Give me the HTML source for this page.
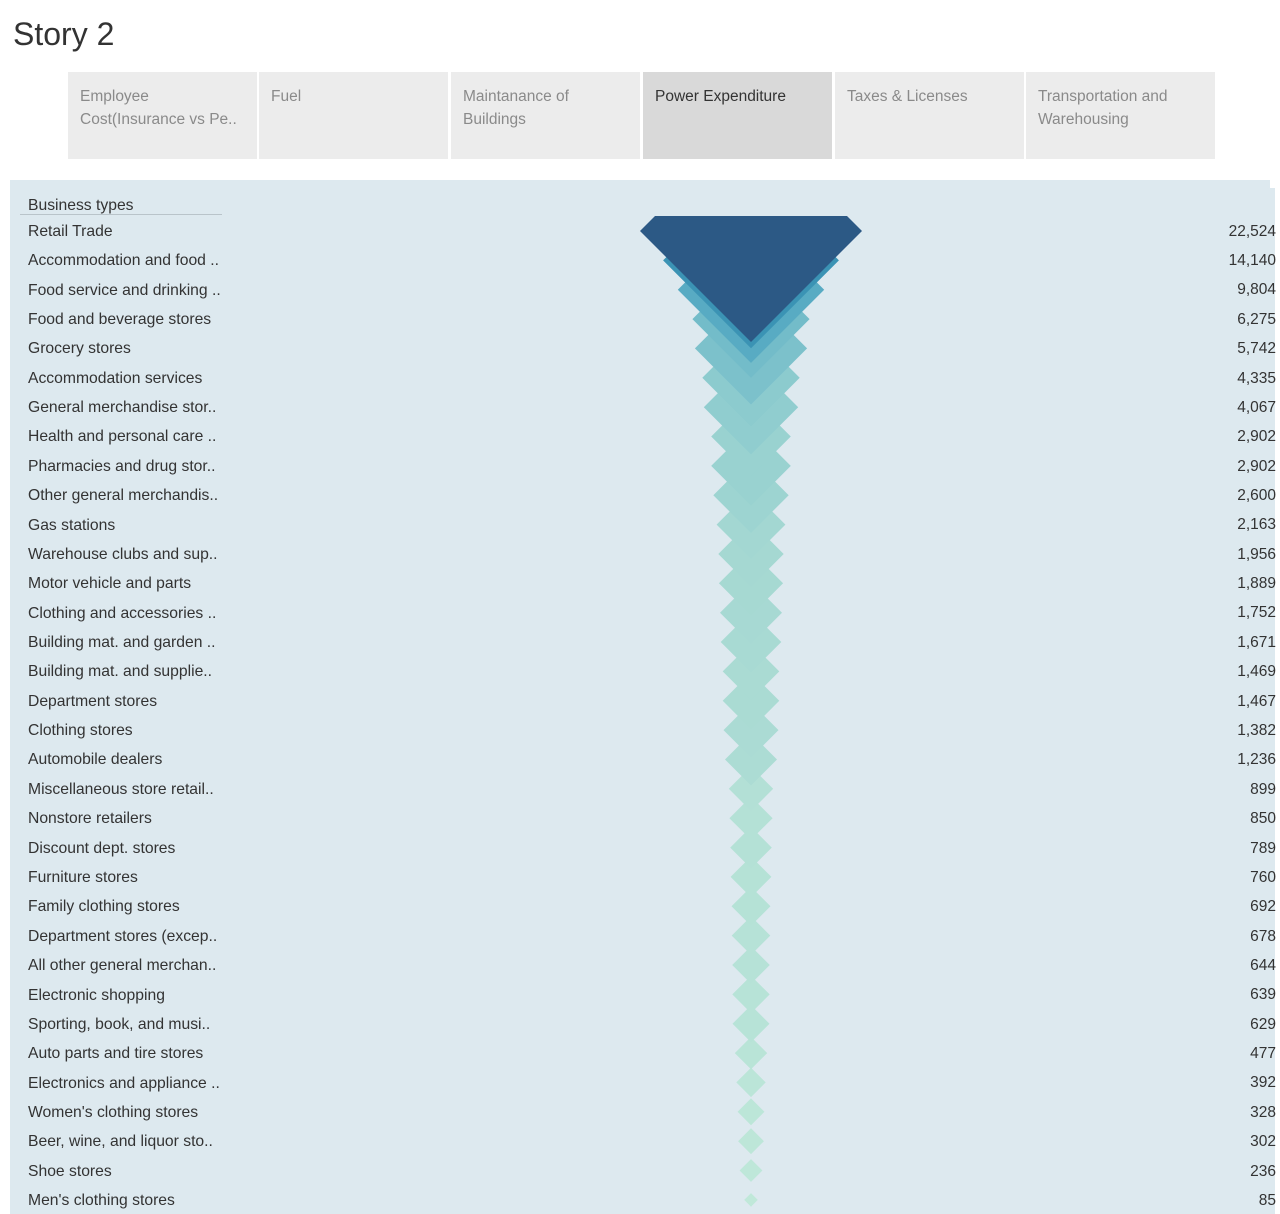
<!DOCTYPE html>
<html><head><meta charset="utf-8"><style>
body{margin:0;width:1280px;height:1214px;background:#fff;font-family:"Liberation Sans",sans-serif;position:relative;overflow:hidden}
h1{position:absolute;left:13px;top:16px;margin:0;font-weight:normal;font-size:32px;color:#333}
.tab{position:absolute;top:72px;height:87px;width:189px;background:#ececec;color:#8a8a8a;font-size:15.5px;line-height:23px;box-sizing:border-box;padding:13px 12px}
.sel{background:#d9d9d9;color:#333}
.panel{position:absolute;left:10px;top:180px;width:1265px;height:1034px;background:#dde9ef}
.l{position:absolute;left:28px;font-size:15.7px;color:#333;line-height:20px;white-space:nowrap;margin-top:1px}
.v{position:absolute;right:4px;font-size:15.5px;color:#333;line-height:20px;text-align:right;margin-top:1px}
</style></head><body>
<h1>Story 2</h1>
<div class="tab" style="left:68px">Employee<br>Cost(Insurance vs Pe..</div>
<div class="tab" style="left:259px">Fuel</div>
<div class="tab" style="left:451px">Maintanance of<br>Buildings</div>
<div class="tab sel" style="left:643px">Power Expenditure</div>
<div class="tab" style="left:835px">Taxes &amp; Licenses</div>
<div class="tab" style="left:1026px">Transportation and<br>Warehousing</div>
<div class="panel"></div>
<div style="position:absolute;left:1270px;top:180px;width:10px;height:8px;background:#fff"></div>
<div class="l" style="top:195px">Business types</div>
<div style="position:absolute;left:20px;top:214px;width:202px;height:1px;background:#b9c4ca"></div>
<svg style="position:absolute;left:0;top:0" width="1280" height="1214">
<defs><clipPath id="c"><rect x="0" y="216" width="1280" height="1000"/></clipPath><path id="d" d="M0,-1L1,0L0,1L-1,0Z"/></defs>
<g clip-path="url(#c)">
<use href="#d" fill="#c0e8d9" transform="translate(751,1199.9) scale(6.8)"/>
<use href="#d" fill="#bee7d9" transform="translate(751,1170.5) scale(11.4)"/>
<use href="#d" fill="#bde6d8" transform="translate(751,1141.2) scale(12.9)"/>
<use href="#d" fill="#bce6d8" transform="translate(751,1111.8) scale(13.4)"/>
<use href="#d" fill="#bbe5d8" transform="translate(751,1082.4) scale(14.7)"/>
<use href="#d" fill="#b9e4d7" transform="translate(751,1053.1) scale(16.2)"/>
<use href="#d" fill="#b7e3d7" transform="translate(751,1023.7) scale(18.5)"/>
<use href="#d" fill="#b7e3d7" transform="translate(751,994.4) scale(18.7)"/>
<use href="#d" fill="#b6e2d7" transform="translate(751,965) scale(18.8)"/>
<use href="#d" fill="#b6e2d7" transform="translate(751,935.6) scale(19.3)"/>
<use href="#d" fill="#b5e2d6" transform="translate(751,906.3) scale(19.5)"/>
<use href="#d" fill="#b5e2d6" transform="translate(751,876.9) scale(20.4)"/>
<use href="#d" fill="#b4e1d6" transform="translate(751,847.6) scale(20.8)"/>
<use href="#d" fill="#b4e1d6" transform="translate(751,818.2) scale(21.6)"/>
<use href="#d" fill="#b3e0d6" transform="translate(751,788.8) scale(22.2)"/>
<use href="#d" fill="#acdcd4" transform="translate(751,759.5) scale(26)"/>
<use href="#d" fill="#abdbd4" transform="translate(751,730.1) scale(27.5)"/>
<use href="#d" fill="#aadbd3" transform="translate(751,700.8) scale(28.3)"/>
<use href="#d" fill="#aadbd3" transform="translate(751,671.4) scale(28.3)"/>
<use href="#d" fill="#a8dad3" transform="translate(751,642) scale(30.3)"/>
<use href="#d" fill="#a7d9d3" transform="translate(751,612.7) scale(31)"/>
<use href="#d" fill="#a6d9d2" transform="translate(751,583.3) scale(32.1)"/>
<use href="#d" fill="#a5d8d2" transform="translate(751,554) scale(32.7)"/>
<use href="#d" fill="#a3d7d2" transform="translate(751,524.6) scale(34.4)"/>
<use href="#d" fill="#9dd4d1" transform="translate(751,495.2) scale(37.7)"/>
<use href="#d" fill="#99d2d0" transform="translate(751,465.9) scale(39.8)"/>
<use href="#d" fill="#99d2d0" transform="translate(751,436.5) scale(39.8)"/>
<use href="#d" fill="#90cdcf" transform="translate(751,407.2) scale(47.2)"/>
<use href="#d" fill="#8ccbce" transform="translate(751,377.8) scale(48.7)"/>
<use href="#d" fill="#7cc1cb" transform="translate(751,348.4) scale(56.1)"/>
<use href="#d" fill="#73bcc9" transform="translate(751,319.1) scale(58.6)"/>
<use href="#d" fill="#58abc3" transform="translate(751,289.7) scale(73.2)"/>
<use href="#d" fill="#3b93b4" transform="translate(751,260.4) scale(87.9)"/>
<use href="#d" fill="#2c5985" transform="translate(751,231) scale(111)"/>
</g></svg>
<div class="l" style="top:221px">Retail Trade</div><div class="v" style="top:221px">22,524</div>
<div class="l" style="top:250px">Accommodation and food ..</div><div class="v" style="top:250px">14,140</div>
<div class="l" style="top:280px">Food service and drinking ..</div><div class="v" style="top:279px">9,804</div>
<div class="l" style="top:309px">Food and beverage stores</div><div class="v" style="top:309px">6,275</div>
<div class="l" style="top:338px">Grocery stores</div><div class="v" style="top:338px">5,742</div>
<div class="l" style="top:368px">Accommodation services</div><div class="v" style="top:368px">4,335</div>
<div class="l" style="top:397px">General merchandise stor..</div><div class="v" style="top:397px">4,067</div>
<div class="l" style="top:426px">Health and personal care ..</div><div class="v" style="top:426px">2,902</div>
<div class="l" style="top:456px">Pharmacies and drug stor..</div><div class="v" style="top:456px">2,902</div>
<div class="l" style="top:485px">Other general merchandis..</div><div class="v" style="top:485px">2,600</div>
<div class="l" style="top:515px">Gas stations</div><div class="v" style="top:514px">2,163</div>
<div class="l" style="top:544px">Warehouse clubs and sup..</div><div class="v" style="top:544px">1,956</div>
<div class="l" style="top:573px">Motor vehicle and parts</div><div class="v" style="top:573px">1,889</div>
<div class="l" style="top:603px">Clothing and accessories ..</div><div class="v" style="top:602px">1,752</div>
<div class="l" style="top:632px">Building mat. and garden ..</div><div class="v" style="top:632px">1,671</div>
<div class="l" style="top:661px">Building mat. and supplie..</div><div class="v" style="top:661px">1,469</div>
<div class="l" style="top:691px">Department stores</div><div class="v" style="top:691px">1,467</div>
<div class="l" style="top:720px">Clothing stores</div><div class="v" style="top:720px">1,382</div>
<div class="l" style="top:749px">Automobile dealers</div><div class="v" style="top:749px">1,236</div>
<div class="l" style="top:779px">Miscellaneous store retail..</div><div class="v" style="top:779px">899</div>
<div class="l" style="top:808px">Nonstore retailers</div><div class="v" style="top:808px">850</div>
<div class="l" style="top:838px">Discount dept. stores</div><div class="v" style="top:838px">789</div>
<div class="l" style="top:867px">Furniture stores</div><div class="v" style="top:867px">760</div>
<div class="l" style="top:896px">Family clothing stores</div><div class="v" style="top:896px">692</div>
<div class="l" style="top:926px">Department stores (excep..</div><div class="v" style="top:926px">678</div>
<div class="l" style="top:955px">All other general merchan..</div><div class="v" style="top:955px">644</div>
<div class="l" style="top:985px">Electronic shopping</div><div class="v" style="top:984px">639</div>
<div class="l" style="top:1014px">Sporting, book, and  musi..</div><div class="v" style="top:1014px">629</div>
<div class="l" style="top:1043px">Auto parts and tire stores</div><div class="v" style="top:1043px">477</div>
<div class="l" style="top:1073px">Electronics and appliance ..</div><div class="v" style="top:1072px">392</div>
<div class="l" style="top:1102px">Women's clothing stores</div><div class="v" style="top:1102px">328</div>
<div class="l" style="top:1131px">Beer, wine, and liquor sto..</div><div class="v" style="top:1131px">302</div>
<div class="l" style="top:1161px">Shoe stores</div><div class="v" style="top:1161px">236</div>
<div class="l" style="top:1190px">Men's clothing stores</div><div class="v" style="top:1190px">85</div>
</body></html>
